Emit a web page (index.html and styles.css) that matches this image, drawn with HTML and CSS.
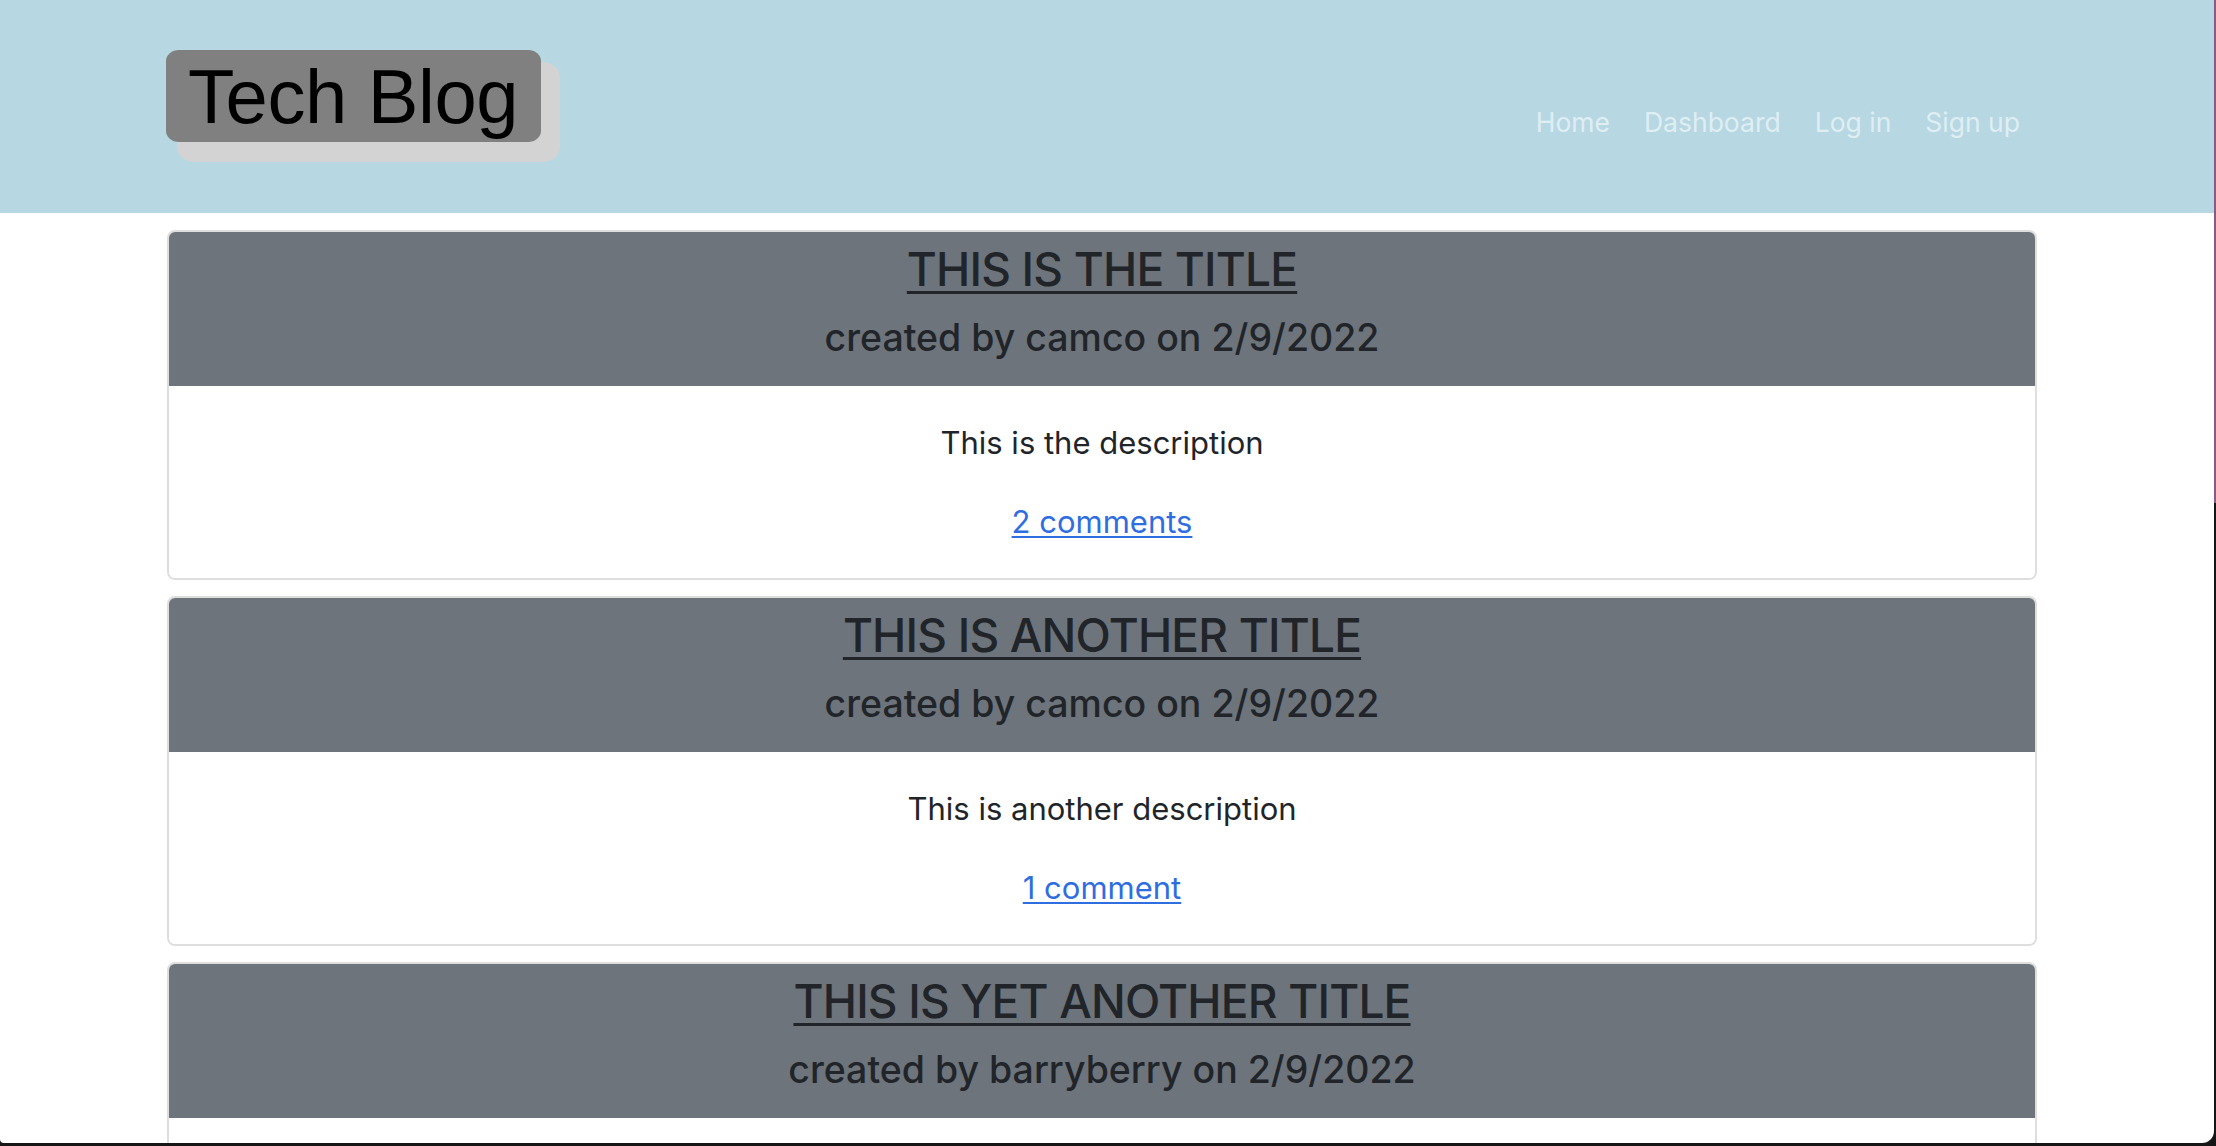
FILE: index.html
```html
<!DOCTYPE html>
<html lang="en">
<head>
<meta charset="utf-8">
<title>Tech Blog</title>
<link rel="stylesheet" href="styles.css">
</head>
<body>
<div class="page">
  <header class="site-header">
    <h1 class="brand"><a href="#">Tech Blog</a></h1>
    <nav class="nav">
      <a href="#">Home</a>
      <a href="#">Dashboard</a>
      <a href="#">Log in</a>
      <a href="#">Sign up</a>
    </nav>
  </header>
  <main class="posts">
    <article class="post">
      <div class="post-head">
        <h2 class="post-title"><a href="#">THIS IS THE TITLE</a></h2>
        <h3 class="post-meta">created by camco on 2/9/2022</h3>
      </div>
      <div class="post-body">
        <p class="post-desc">This is the description</p>
        <a class="post-comments" href="#">2 comments</a>
      </div>
    </article>
    <article class="post">
      <div class="post-head">
        <h2 class="post-title"><a href="#">THIS IS ANOTHER TITLE</a></h2>
        <h3 class="post-meta">created by camco on 2/9/2022</h3>
      </div>
      <div class="post-body">
        <p class="post-desc">This is another description</p>
        <a class="post-comments" href="#">1 comment</a>
      </div>
    </article>
    <article class="post">
      <div class="post-head">
        <h2 class="post-title"><a href="#">THIS IS YET ANOTHER TITLE</a></h2>
        <h3 class="post-meta">created by barryberry on 2/9/2022</h3>
      </div>
      <div class="post-body post-body-empty"></div>
    </article>
  </main>
</div>
</body>
</html>
```

FILE: styles.css
```css
html, body {
  margin: 0;
  padding: 0;
  height: 1146px;
  overflow: hidden;
}

body {
  background: linear-gradient(to bottom, #8a5a84 0, #8a5a84 503px, #161616 503px);
  font-family: Inter, "Noto Sans", sans-serif;
  color: #212529;
}

.page {
  margin-right: 2px;
  height: 1143px;
  overflow: hidden;
  background: #ffffff;
  border-bottom-right-radius: 12px;
  border-bottom-left-radius: 4px;
}

.site-header {
  height: 213px;
  box-sizing: border-box;
  background: #b7d7e3;
  padding: 50px 177px 0 166px;
  display: flex;
  justify-content: space-between;
  align-items: flex-start;
}

.brand {
  margin: 0;
  background: #808080;
  border-radius: 13px / 11px;
  box-shadow: 15px 16px 0 4px #d3d3d3;
  padding: 2px 23px 0 22px;
  height: 92px;
  box-sizing: border-box;
  font-family: "Liberation Sans", Arial, sans-serif;
  font-weight: 400;
  font-size: 76px;
  letter-spacing: -0.4px;
  line-height: 90px;
}

.brand a {
  color: #000000;
  text-decoration: none;
}

.nav {
  margin-top: 52px;
  display: flex;
  font-size: 26.5px;
  line-height: 40px;
}

.nav a {
  padding: 0 17px;
  color: #dfeef3;
  text-decoration: none;
}

.posts {
  padding: 17px 177px 0 167px;
}

.post {
  border: 2px solid #dedede;
  border-radius: 8px;
  overflow: hidden;
  margin-bottom: 16px;
  text-align: center;
}

.post-head {
  background: #6d747c;
  padding: 8px 16px 25px;
}

.post-title {
  margin: 0 0 17px;
  font-size: 46px;
  font-weight: 500;
  letter-spacing: -0.8px;
  line-height: 58px;
}

.post-title a {
  color: #212529;
  text-decoration: underline;
  text-decoration-thickness: 3px;
  text-underline-offset: 5px;
}

.post-meta {
  margin: 0;
  font-size: 37.5px;
  font-weight: 500;
  line-height: 46px;
}

.post-body {
  padding: 33px 16px 32px;
  background: #ffffff;
}

.post-body-empty {
  height: 120px;
}

.post-desc {
  margin: 0 0 31px;
  font-size: 31px;
  line-height: 48px;
}

.post-comments {
  display: inline-block;
  font-size: 31px;
  line-height: 48px;
  color: #2f6ee0;
  text-decoration: underline;
  text-decoration-thickness: 2px;
  text-underline-offset: 3px;
}
```
